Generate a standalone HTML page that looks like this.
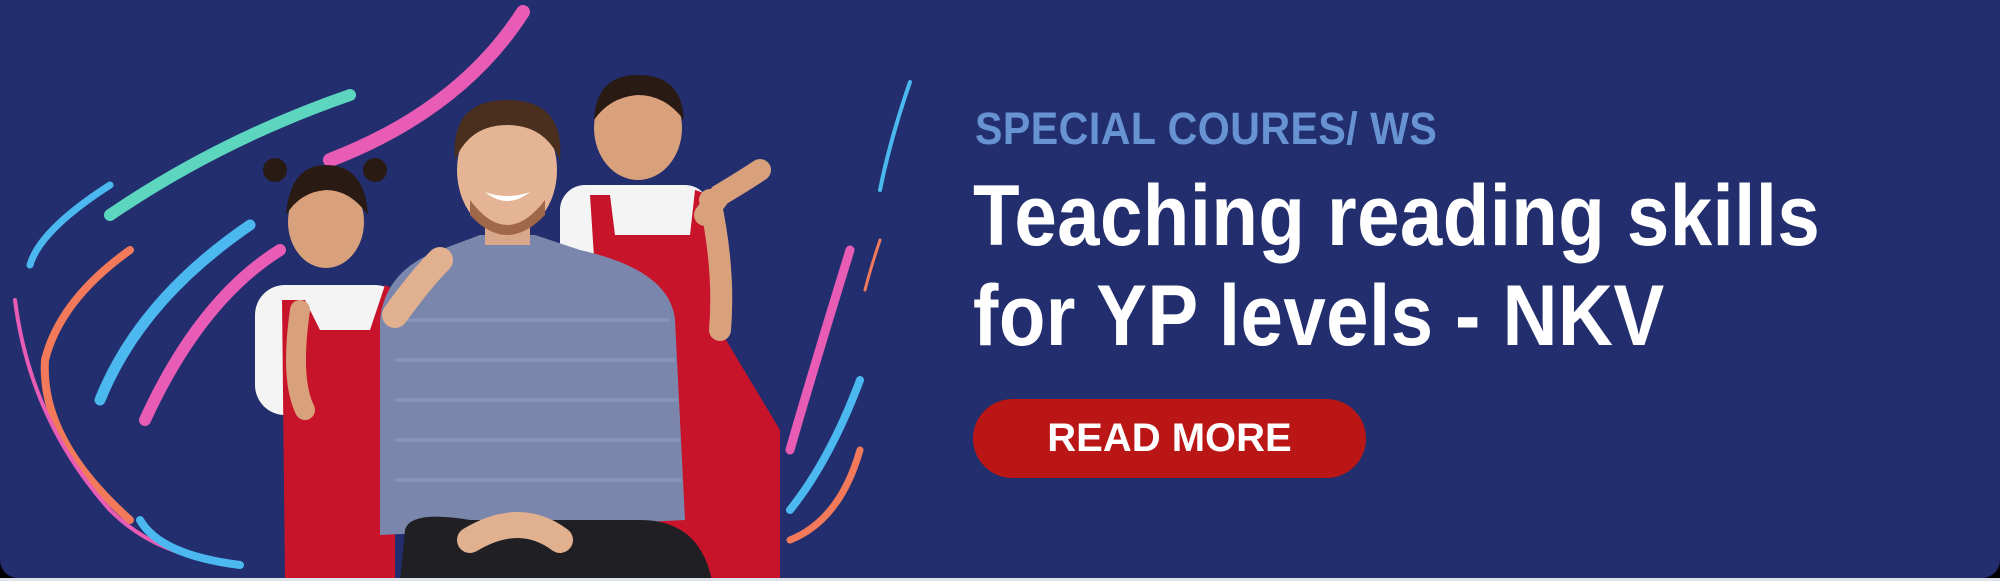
<!DOCTYPE html>
<html><head><meta charset="utf-8"><style>
html,body{margin:0;padding:0;background:#000;}
.wrap{position:relative;width:2000px;height:578px;background:#222e6e;border-radius:0 0 18px 18px;overflow:hidden;font-family:"Liberation Sans",sans-serif;}
.strip{position:absolute;left:0;top:578px;width:2000px;height:3px;background:#dfe3ea;}
svg{position:absolute;left:0;top:0;}
.sub{position:absolute;left:975px;top:103px;font-size:45px;font-weight:bold;color:#6793d2;letter-spacing:0.5px;transform:scaleX(0.914);transform-origin:left top;white-space:nowrap;}
.h{position:absolute;left:973px;top:166px;font-size:86px;font-weight:bold;color:#fff;line-height:100px;letter-spacing:0.5px;transform:scaleX(0.886);transform-origin:left top;white-space:nowrap;}
.btn{position:absolute;left:973px;top:399px;width:393px;height:79px;border-radius:40px;background:#bb1616;color:#fff;font-size:40px;font-weight:bold;text-align:center;line-height:79px;}
</style></head><body>
<div class="wrap">
<svg width="2000" height="578" viewBox="0 0 2000 578">
 <g fill="none" stroke-linecap="round">
  <path d="M523 12 Q460 110 330 160" stroke="#e95cb6" stroke-width="14"/>
  <path d="M350 95 Q220 140 110 215" stroke="#5dd6c0" stroke-width="12"/>
  <path d="M110 185 Q40 230 30 265" stroke="#4cb8f0" stroke-width="7"/>
  <path d="M250 225 Q140 300 100 400" stroke="#4cb8f0" stroke-width="11"/>
  <path d="M130 250 Q60 300 45 360 Q40 440 130 520" stroke="#f27a5a" stroke-width="8"/>
  <path d="M15 300 Q30 420 110 510 Q150 550 210 560" stroke="#e95cb6" stroke-width="4"/>
  <path d="M280 250 Q200 300 145 420" stroke="#e95cb6" stroke-width="12"/>
  <path d="M140 520 Q160 555 240 565" stroke="#4cb8f0" stroke-width="8"/>
  <path d="M910 82 Q890 140 880 190" stroke="#4cb8f0" stroke-width="4"/>
  <path d="M850 250 Q810 380 790 450" stroke="#e95cb6" stroke-width="9"/>
  <path d="M860 380 Q830 460 790 510" stroke="#4cb8f0" stroke-width="8"/>
  <path d="M860 450 Q840 520 790 540" stroke="#f27a5a" stroke-width="7"/>
  <path d="M880 240 Q870 270 865 290" stroke="#f27a5a" stroke-width="3"/>
 </g>
 <rect x="255" y="285" width="150" height="130" rx="30" fill="#f4f4f4"/>
 <path d="M282 300 L305 300 L320 330 L370 330 L385 285 L395 290 L395 581 L285 581 Z" fill="#c8142a"/>
 <ellipse cx="326" cy="222" rx="38" ry="46" fill="#d9a07c"/>
 <path d="M286 215 Q290 165 326 165 Q365 165 368 215 Q350 190 326 190 Q300 192 286 215Z" fill="#2a1a14"/>
 <circle cx="275" cy="170" r="12" fill="#2a1a14"/><circle cx="375" cy="170" r="12" fill="#2a1a14"/>
 <path d="M300 310 Q290 380 305 410" stroke="#d9a07c" stroke-width="20" fill="none" stroke-linecap="round"/>
 <rect x="560" y="185" width="150" height="120" rx="25" fill="#f4f4f4"/>
 <path d="M590 195 L610 195 L615 235 L690 235 L695 190 L710 195 L720 330 L780 430 L780 581 L620 581 L600 350 Z" fill="#c8142a"/>
 <ellipse cx="638" cy="128" rx="44" ry="52" fill="#d9a07c"/>
 <path d="M594 120 Q596 75 638 75 Q682 75 684 120 Q665 95 638 95 Q610 97 594 120Z" fill="#2a1a14"/>
 <path d="M710 200 Q725 270 720 330" stroke="#d9a07c" stroke-width="22" fill="none" stroke-linecap="round"/>
 <path d="M705 215 L720 195 Q745 180 760 170" stroke="#d9a07c" stroke-width="22" fill="none" stroke-linecap="round"/>
 <path d="M380 320 Q385 270 440 250 L480 235 L535 235 L580 250 Q670 270 675 320 L685 520 L380 535 Z" fill="#7b86ad"/>
 <path d="M395 320 L670 320 M395 360 L675 360 M395 400 L678 400 M395 440 L680 440 M395 480 L682 480" stroke="#9aa3c4" stroke-width="3" opacity="0.5"/>
 <path d="M405 530 Q410 510 470 520 L640 520 Q700 520 712 581 L400 581Z" fill="#1f1f24"/>
 <path d="M470 540 Q520 510 560 540" stroke="#e0b08f" stroke-width="26" fill="none" stroke-linecap="round"/>
 <path d="M395 315 Q420 280 440 260" stroke="#e0b08f" stroke-width="26" fill="none" stroke-linecap="round"/>
 <rect x="485" y="205" width="45" height="40" fill="#d9a88a"/>
 <ellipse cx="507" cy="170" rx="50" ry="64" fill="#e4b494"/>
 <path d="M455 160 Q450 100 507 100 Q565 100 560 160 Q545 125 507 125 Q470 125 455 160Z" fill="#4a2e1e"/>
 <path d="M470 200 Q507 250 545 200 L545 215 Q507 255 470 215Z" fill="#a06848"/>
 <path d="M485 192 Q507 210 530 192 Q507 200 485 192Z" fill="#fff"/>
</svg>
<div class="sub">SPECIAL COURES/ WS</div>
<div class="h">Teaching reading skills<br>for YP levels - NKV</div>
<div class="btn">READ MORE</div>
</div>
<div class="strip"></div>
</body></html>
